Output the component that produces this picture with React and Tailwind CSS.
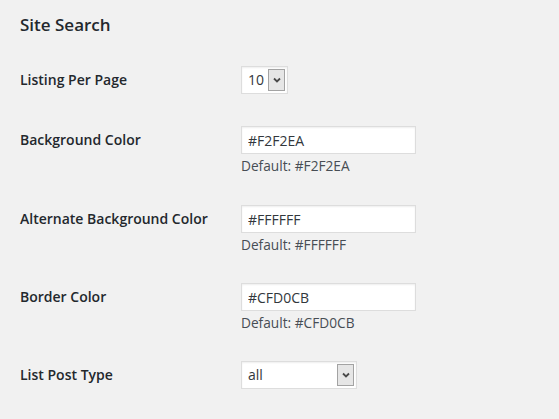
import React from 'react';

const ROWS = [
  { label: "Background Color", value: "#F2F2EA", h: "h-[79px]" },
  { label: "Alternate Background Color", value: "#FFFFFF", h: "h-[78px]" },
  { label: "Border Color", value: "#CFD0CB", h: "h-[78px]" },
];

const Chevron = () => (
  <svg width="8" height="6" viewBox="0 0 8 6">
    <polyline points="1,1.5 4,4.5 7,1.5" fill="none" stroke="#4a4a4a" strokeWidth="1.8" />
  </svg>
);

// fake native select, headless chrome draws its own arrow otherwise
const FakeSelect = ({ value, width }) => (
  <div
    className={`${width} h-[28px] flex items-center justify-between bg-white border border-[#dddddd] shadow-[inset_0_1px_2px_rgba(0,0,0,0.07)] pl-[6px] pr-[2px]`}
  >
    <span className="text-[14px] text-[#32373c] leading-none">{value}</span>
    <div className="w-[17px] h-[22px] flex items-center justify-center bg-[#e6e6e6] border border-[#a3a3a3]">
      <Chevron />
    </div>
  </div>
);

const App = () => {
  return (
    <div
      className="w-[559px] h-[419px] bg-[#f1f1f1] pl-[20px] overflow-hidden"
      style={{ fontFamily: '"Open Sans", "Liberation Sans", sans-serif' }}
    >
      <h2 className="pt-[14px] text-[17px] leading-[22px] font-semibold text-[#23282d]">Site Search</h2>

      <div className="mt-[15px]">
        {/* listing per page */}
        <div className="flex h-[60px]">
          <div className="w-[221px] pt-[20px] text-[14px] leading-[18px] font-semibold text-[#23282d]">Listing Per Page</div>
          <div className="pt-[15px]">
            <FakeSelect value="10" width="w-[47px]" />
          </div>
        </div>

        {ROWS.map((row) => (
          <div key={row.label} className={`flex ${row.h}`}>
            <div className="w-[221px] pt-[20px] text-[14px] leading-[18px] font-semibold text-[#23282d]">{row.label}</div>
            <div className="pt-[15px]">
              <input
                type="text"
                defaultValue={row.value}
                className="w-[175px] h-[28px] px-[6px] bg-white border border-[#dddddd] shadow-[inset_0_1px_2px_rgba(0,0,0,0.07)] text-[14px] text-[#32373c] outline-none"
              />
              <p className="mt-[3px] text-[13.7px] leading-[18px] text-[#474d54]">Default: {row.value}</p>
            </div>
          </div>
        ))}

        {/* post type */}
        <div className="flex h-[60px]">
          <div className="w-[221px] pt-[20px] text-[14px] leading-[18px] font-semibold text-[#23282d]">List Post Type</div>
          <div className="pt-[15px]">
            <FakeSelect value="all" width="w-[116px]" />
          </div>
        </div>
      </div>
    </div>
  );
};

export default App;
